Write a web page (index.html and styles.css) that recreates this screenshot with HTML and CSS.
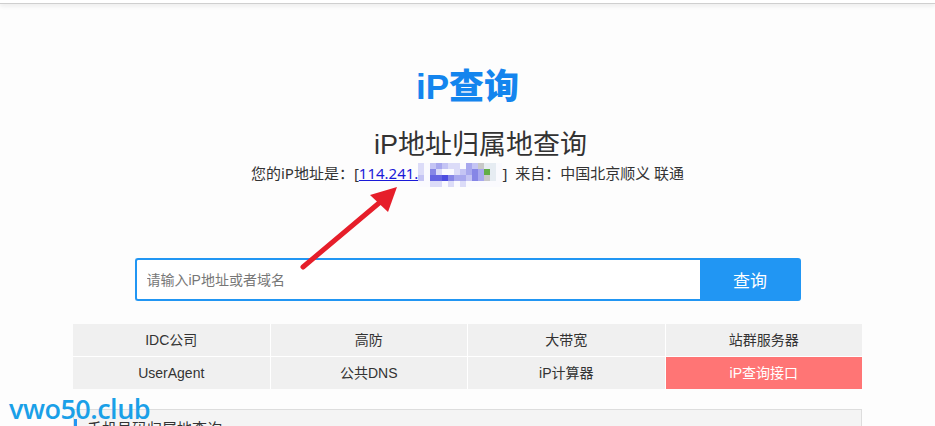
FILE: index.html
```html
<!DOCTYPE html>
<html lang="zh-CN">
<head>
    <meta charset="UTF-8">
    <meta name="viewport" content="width=device-width, initial-scale=1.0">
    <title>iP查询</title>
    <link rel="stylesheet" href="styles.css">
</head>
<body>
    <div class="topbar"></div>

    <div class="container">
        <h1 class="logo">iP查询</h1>
        <h2 class="subtitle">iP地址归属地查询</h2>
        <p class="myip">您的iP地址是：[<a href="#">114.241.</a><span class="mosaic">
            <i class="c1"></i><i class="c0"></i><i class="c2"></i><i class="c3"></i><i class="c2"></i><i class="c1"></i><i class="c1"></i><i class="c0"></i><i class="c3"></i><i class="c2"></i><i class="c8"></i><i class="c9"></i><i class="c9"></i><i class="c0"></i>
            <i class="c1"></i><i class="c0"></i><i class="c4"></i><i class="c1"></i><i class="c0"></i><i class="c0"></i><i class="c1"></i><i class="c2"></i><i class="c3"></i><i class="c4"></i><i class="c3"></i><i class="c7"></i><i class="c9"></i><i class="c0"></i>
            <i class="c2"></i><i class="c0"></i><i class="c5"></i><i class="c5"></i><i class="c6"></i><i class="c4"></i><i class="c3"></i><i class="c3"></i><i class="c2"></i><i class="c4"></i><i class="c3"></i><i class="c8"></i><i class="c9"></i><i class="c0"></i>
            <i class="c0"></i><i class="c0"></i><i class="c1"></i><i class="c1"></i><i class="c0"></i><i class="c1"></i><i class="c0"></i><i class="c1"></i><i class="c0"></i><i class="c0"></i><i class="c0"></i><i class="c0"></i><i class="c0"></i><i class="c0"></i>
        </span>]&nbsp; 来自：中国北京顺义 联通</p>

        <form class="search" onsubmit="return false">
            <input type="text" class="search-input" placeholder="请输入iP地址或者域名">
            <button type="submit" class="search-btn">查询</button>
        </form>

        <div class="links">
            <a href="#">IDC公司</a>
            <a href="#">高防</a>
            <a href="#">大带宽</a>
            <a href="#">站群服务器</a>
            <a href="#">UserAgent</a>
            <a href="#">公共DNS</a>
            <a href="#">iP计算器</a>
            <a href="#" class="active">iP查询接口</a>
        </div>

        <div class="panel">
            <h3 class="panel-title">手机号码归属地查询</h3>
        </div>
    </div>

    <!-- arrow drawn over the page -->
    <svg class="arrow" width="935" height="426" viewBox="0 0 935 426">
        <line x1="303" y1="267" x2="385" y2="198" stroke="#e61e2a" stroke-width="5" stroke-linecap="round"/>
        <polygon points="397,187 370,195 388,212" fill="#e61e2a"/>
    </svg>

    <div class="watermark">vwo50.club</div>
</body>
</html>
```

FILE: styles.css
```css
/* Page */
body {
    margin: 0;
    background: #fdfdfd;
    font-family: 'Liberation Sans', 'Noto Sans CJK SC', sans-serif;
    color: #333;
    height: 426px;
    overflow: hidden;
}

.topbar {
    height: 3px;
    background: #fff;
    border-bottom: 1px solid #cfcfcf;
    box-shadow: 0 2px 4px rgba(0, 0, 0, 0.08);
}

.container {
    width: 789px;
    margin: 0 auto;
    text-align: center;
}

/* Heading */
.logo {
    margin: 60px 0 0;
    font-size: 35px;
    line-height: 46px;
    font-weight: 900;
    color: #1485ee;
}

.subtitle {
    margin: 18px 0 0;
    padding-left: 26px;
    font-size: 27px;
    line-height: 34px;
    font-weight: normal;
    color: #333;
}

.myip {
    margin: 0;
    font-family: 'Noto Sans', 'Noto Sans CJK SC', sans-serif;
    font-size: 15px;
    line-height: 22px;
    color: #333;
}

.myip a {
    color: #1a1ad8;
}

/* pixelated part of the address */
.mosaic {
    display: inline-grid;
    grid-template-columns: repeat(14, 6px);
    grid-auto-rows: 6px;
    margin: -5px 0;
    vertical-align: middle;
}

.mosaic i { display: block; }
.mosaic .c0 { background: #fafafe; }
.mosaic .c1 { background: #dcdcf8; }
.mosaic .c2 { background: #c4c4f4; }
.mosaic .c3 { background: #a8a8ee; }
.mosaic .c4 { background: #8686e6; }
.mosaic .c5 { background: #6464e2; }
.mosaic .c6 { background: #4c4ce0; }
.mosaic .c7 { background: #62ae46; }
.mosaic .c8 { background: #c8c8c8; }
.mosaic .c9 { background: #e6ecf2; }

/* Search */
.search {
    display: flex;
    width: 666px;
    height: 43px;
    margin: 74px auto 0;
}

.search-input {
    flex: 1;
    box-sizing: border-box;
    border: 2px solid #2196f3;
    border-right: none;
    border-radius: 3px 0 0 3px;
    padding: 0 10px;
    font-family: inherit;
    font-size: 14px;
    outline: none;
    background: #fff;
}

.search-input::placeholder {
    color: #777;
}

.search-btn {
    width: 101px;
    border: none;
    border-radius: 0 3px 3px 0;
    background: #2196f3;
    color: #fff;
    font-family: inherit;
    font-size: 17px;
    cursor: pointer;
}

/* Quick links */
.links {
    display: grid;
    grid-template-columns: repeat(4, 1fr);
    gap: 1px;
    margin-top: 23px;
    background: #fff;
}

.links a {
    height: 32px;
    line-height: 32px;
    background: #f0f0f0;
    color: #333;
    font-size: 14px;
    text-decoration: none;
}

.links a.active {
    background: #ff7575;
    color: #fff;
}

/* Lower panel */
.panel {
    margin-top: 20px;
    height: 60px;
    border: 1px solid #ddd;
    background: #f4f4f4;
    text-align: left;
}

.panel-title {
    margin: 9px 0 0;
    padding-left: 10px;
    border-left: 3px solid #2196f3;
    font-size: 15px;
    line-height: 20px;
    font-weight: normal;
    color: #333;
}

/* Overlays */
.arrow {
    position: absolute;
    left: 0;
    top: 0;
    pointer-events: none;
}

.watermark {
    position: absolute;
    left: 9px;
    top: 390px;
    font-family: 'Open Sans', sans-serif;
    font-size: 27px;
    font-weight: 600;
    letter-spacing: -0.5px;
    color: #1aa0e8;
}
```
